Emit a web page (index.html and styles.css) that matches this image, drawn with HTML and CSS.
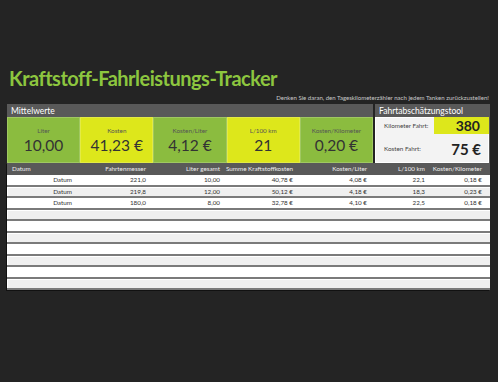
FILE: index.html
```html
<!DOCTYPE html>
<html lang="de">
<head>
<meta charset="utf-8">
<title>Kraftstoff-Fahrleistungs-Tracker</title>
<link rel="stylesheet" href="styles.css">
</head>
<body>
<div class="page">
  <h1 class="title">Kraftstoff-Fahrleistungs-Tracker</h1>
  <p class="note">Denken Sie daran, den Tageskilometerzähler nach jedem Tanken zurückzustellen!</p>
  <div class="dash">
    <section class="panel averages">
      <div class="panel-head">Mittelwerte</div>
      <div class="tiles">
        <div class="tile green"><span class="t-label">Liter</span><span class="t-value">10,00</span></div>
        <div class="tile yellow"><span class="t-label">Kosten</span><span class="t-value">41,23 €</span></div>
        <div class="tile green"><span class="t-label">Kosten/Liter</span><span class="t-value">4,12 €</span></div>
        <div class="tile yellow"><span class="t-label">L/100 km</span><span class="t-value">21</span></div>
        <div class="tile green"><span class="t-label">Kosten/Kilometer</span><span class="t-value">0,20 €</span></div>
      </div>
    </section>
    <section class="panel tool">
      <div class="panel-head">Fahrtabschätzungstool</div>
      <div class="tool-body">
        <div class="tool-row">
          <span class="tool-label">Kilometer Fahrt:</span>
          <span class="tool-input">380</span>
        </div>
        <div class="tool-row">
          <span class="tool-label">Kosten Fahrt:</span>
          <span class="tool-out">75 €</span>
        </div>
      </div>
    </section>
  </div>
  <div class="table">
    <div class="row head">
      <span class="c left">Datum</span><span class="c">Fahrtenmesser</span><span class="c">Liter gesamt</span><span class="c">Summe Kraftstoffkosten</span><span class="c">Kosten/Liter</span><span class="c">L/100 km</span><span class="c last">Kosten/Kilometer</span>
    </div>
    <div class="row">
      <span class="c date">Datum</span><span class="c">221,0</span><span class="c">10,00</span><span class="c">40,78 €</span><span class="c">4,08 €</span><span class="c">22,1</span><span class="c last">0,18 €</span>
    </div>
    <div class="row alt">
      <span class="c date">Datum</span><span class="c">219,8</span><span class="c">12,00</span><span class="c">50,12 €</span><span class="c">4,18 €</span><span class="c">18,3</span><span class="c last">0,23 €</span>
    </div>
    <div class="row">
      <span class="c date">Datum</span><span class="c">180,0</span><span class="c">8,00</span><span class="c">32,78 €</span><span class="c">4,10 €</span><span class="c">22,5</span><span class="c last">0,18 €</span>
    </div>
    <div class="row alt"></div>
    <div class="row"></div>
    <div class="row alt"></div>
    <div class="row"></div>
    <div class="row alt"></div>
    <div class="row"></div>
    <div class="row alt"></div>
  </div>
</div>
</body>
</html>
```
FILE: styles.css
```css
html, body {
  margin: 0;
  padding: 0;
  background: #242424;
}
body {
  font-family: "Lato", "Open Sans", sans-serif;
  color: #333;
}
.page {
  width: 498px;
  height: 382px;
  padding-top: 64px;
  box-sizing: border-box;
}
.title {
  margin: 0 0 0 9px;
  font-size: 20px;
  line-height: 28px;
  font-weight: 700;
  color: #8dc63f;
  letter-spacing: -0.5px;
  white-space: nowrap;
}
.note {
  margin: 0 9px 0 0;
  text-align: right;
  font-size: 6.05px;
  line-height: 11px;
  color: #c8c8c8;
  white-space: nowrap;
}
.dash {
  display: flex;
  gap: 2px;
  margin: 1px 0 0 7px;
  width: 483px;
}
.panel-head {
  height: 13px;
  background: #595959;
  color: #fff;
  font-size: 8.5px;
  line-height: 14px;
  padding-left: 4px;
  white-space: nowrap;
}
.averages {
  width: 366px;
}
.tiles {
  display: grid;
  grid-template-columns: repeat(5, 1fr);
  height: 46px;
}
.tile {
  display: flex;
  flex-direction: column;
  align-items: center;
  box-shadow: inset 0 0 0 1px rgba(255,255,255,0.18);
}
.green { background: #8bbc3f; }
.yellow { background: #dde71b; }
.t-label {
  margin-top: 9px;
  font-size: 6.3px;
  line-height: 9px;
  color: #555;
  white-space: nowrap;
}
.t-value {
  margin-top: 1px;
  font-size: 15.5px;
  line-height: 18px;
  color: #333;
  white-space: nowrap;
}
.tool {
  width: 115px;
  background: #595959;
}
.tool .panel-head {
  font-size: 8.5px;
}
.tool-body {
  height: 46px;
  background: #f3f3f3;
  margin-right: 1px;
  box-shadow: inset 0 0 0 1px #fff;
}
.tool-row {
  display: flex;
  align-items: center;
  justify-content: space-between;
  height: 17px;
}
.tool-row + .tool-row {
  height: 29px;
}
.tool-label {
  font-size: 6.3px;
  color: #444;
  padding-left: 9px;
  white-space: nowrap;
}
.tool-input {
  width: 55px;
  height: 17px;
  box-sizing: border-box;
  background: #dde71b;
  font-size: 14px;
  line-height: 18px;
  font-weight: 700;
  color: #222;
  text-align: right;
  padding-right: 9px;
}
.tool-out {
  font-size: 15px;
  font-weight: 700;
  color: #222;
  padding-right: 8px;
  white-space: nowrap;
}
.table {
  margin-left: 7px;
  width: 483px;
  box-shadow: -1px 1px 0 #111;
}
.row {
  display: grid;
  grid-template-columns: 93px 48px 74px 73px 74px 58px 63px;
  height: 9.5px;
  background: #fff;
  border-bottom: 2px solid #7a7a7a;
  font-size: 6.3px;
  line-height: 10px;
  color: #333;
}
.row.alt {
  background: #efefef;
  box-shadow: inset 1px 1px 0 #fff;
}
.row.head {
  height: 12px;
  border-bottom: 0;
  background: #595959;
  color: #eee;
  line-height: 12px;
}
.c {
  display: flex;
  justify-content: flex-end;
  padding-right: 2px;
  white-space: nowrap;
}
.c.left {
  justify-content: flex-start;
  padding-left: 5px;
}
.c.date {
  justify-content: center;
  padding-left: 18px;
  padding-right: 0;
}
.c.last {
  padding-right: 8px;
}
```
